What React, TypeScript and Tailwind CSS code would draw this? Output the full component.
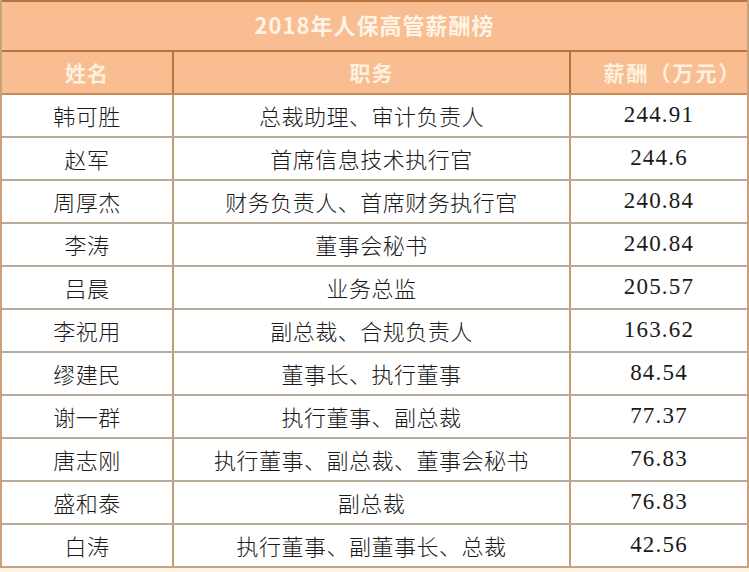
const rows = [
  { name: "韩可胜", role: "总裁助理、审计负责人", pay: "244.91" },
  { name: "赵军", role: "首席信息技术执行官", pay: "244.6" },
  { name: "周厚杰", role: "财务负责人、首席财务执行官", pay: "240.84" },
  { name: "李涛", role: "董事会秘书", pay: "240.84" },
  { name: "吕晨", role: "业务总监", pay: "205.57" },
  { name: "李祝用", role: "副总裁、合规负责人", pay: "163.62" },
  { name: "缪建民", role: "董事长、执行董事", pay: "84.54" },
  { name: "谢一群", role: "执行董事、副总裁", pay: "77.37" },
  { name: "唐志刚", role: "执行董事、副总裁、董事会秘书", pay: "76.83" },
  { name: "盛和泰", role: "副总裁", pay: "76.83" },
  { name: "白涛", role: "执行董事、副董事长、总裁", pay: "42.56" },
]

const cjk = "font-['Noto_Sans_CJK_SC',sans-serif]"

export default function App() {
  return (
    <div className="w-[749px] h-[572px] bg-[#faf3e6] overflow-hidden">
      <div className="border-l-2 border-r-2 border-[#c9a27c]">
        {/* title */}
        <div
          className={`h-[52px] border-t-2 border-b-2 border-[#b8733f] bg-[#f8bd91] flex items-center justify-center pb-[3px] text-[22px] font-bold text-[#fdf4e6] tracking-[1px] ${cjk}`}
        >
          2018年人保高管薪酬榜
        </div>

        {/* header */}
        <div
          className={`grid grid-cols-[170px_397px_1fr] h-[41px] bg-[#f8bd91] text-[21px] font-bold text-[#fdf0de] ${cjk}`}
        >
          <div className="flex items-center justify-center tracking-[1px]">姓名</div>
          <div className="flex items-center justify-center tracking-[1px] border-l-2 border-[#b8733f]">职务</div>
          <div className="flex items-center justify-center pl-[27px] tracking-[2px] border-l-2 border-[#b8733f]">
            薪酬（万元）
          </div>
        </div>

        {/* data */}
        {rows.map((r, i) => (
          <div
            key={r.name}
            className={`grid grid-cols-[170px_397px_1fr] h-[43px] border-t-2 bg-white ${
              i === 0 ? "border-[#c98a55]" : "border-[#b9ab9b]"
            }`}
          >
            <div className={`flex items-center justify-center text-[22px] font-light text-[#1a1a1a] tracking-[0.5px] ${cjk}`}>
              {r.name}
            </div>
            <div
              className={`flex items-center justify-center border-l-2 border-[#c49c74] text-[22px] font-light text-[#1a1a1a] tracking-[0.5px] ${cjk}`}
            >
              {r.role}
            </div>
            <div className="flex items-center justify-center border-l-2 border-[#c49c74] font-['Liberation_Serif',serif] text-[23px] tracking-[1.2px] text-[#1a1a1a]">
              {r.pay}
            </div>
          </div>
        ))}
        <div className="border-t-2 border-[#c9a27c]" />
      </div>
    </div>
  )
}
